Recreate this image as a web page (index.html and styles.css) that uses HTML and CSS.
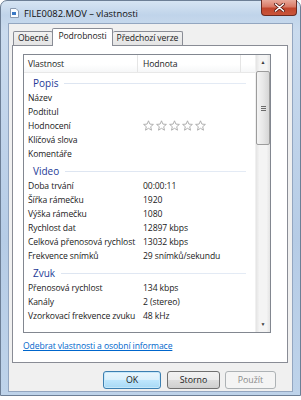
FILE: index.html
```html
<!DOCTYPE html>
<html lang="cs">
<head>
    <meta charset="UTF-8">
    <meta name="viewport" content="width=device-width, initial-scale=1.0">
    <title>FILE0082.MOV – vlastnosti</title>
    <link rel="stylesheet" href="styles.css">
</head>
<body>
    <div class="window">
        <div class="titlebar">
            <svg class="file-icon" width="9" height="10" viewBox="0 0 9 10">
                <path d="M0.5 0.5h5.5l2.5 2.5v6.5h-8z" fill="#fafcff" stroke="#8a9ab0"/>
                <rect x="2" y="4" width="4" height="3" fill="#3b78c4"/>
            </svg>
            <span class="title">FILE0082.MOV – vlastnosti</span>
            <div class="close-btn">
                <svg width="11" height="9" viewBox="0 0 11 9">
                    <path d="M1.5 1l8 7M9.5 1l-8 7" stroke="#5a1a10" stroke-width="3" stroke-linecap="round"/>
                    <path d="M1.5 1l8 7M9.5 1l-8 7" stroke="#fff" stroke-width="1.6" stroke-linecap="round"/>
                </svg>
            </div>
        </div>
        <div class="client">
            <div class="tabs">
                <div class="tab tab-first">Obecné</div>
                <div class="tab tab-active">Podrobnosti</div>
                <div class="tab">Předchozí verze</div>
            </div>
            <div class="panel">
                <div class="listbox">
                    <div class="list-content">
                        <div class="list-header">
                            <div class="hcell hcell-name">Vlastnost</div>
                            <div class="hcell hcell-value">Hodnota</div>
                            <div class="hcell hcell-rest"></div>
                        </div>

                        <div class="group"><span>Popis</span><i></i></div>
                        <div class="row"><span class="name">Název</span><span class="value"></span></div>
                        <div class="row"><span class="name">Podtitul</span><span class="value"></span></div>
                        <div class="row"><span class="name">Hodnocení</span>
                            <span class="value">
                                <svg class="stars" width="66" height="12" viewBox="0 0 66 12">
                                    <g fill="none" stroke="#a8a8a8" stroke-width="0.9" stroke-linejoin="round">
                                        <path id="star" d="M5.5 0.8l1.4 3.3 3.5 0.3-2.7 2.3 0.8 3.5-3-1.9-3 1.9 0.8-3.5-2.7-2.3 3.5-0.3z"/>
                                        <use href="#star" x="13"/>
                                        <use href="#star" x="26"/>
                                        <use href="#star" x="39"/>
                                        <use href="#star" x="52"/>
                                    </g>
                                </svg>
                            </span>
                        </div>
                        <div class="row"><span class="name">Klíčová slova</span><span class="value"></span></div>
                        <div class="row"><span class="name">Komentáře</span><span class="value"></span></div>

                        <div class="group"><span>Video</span><i></i></div>
                        <div class="row"><span class="name">Doba trvání</span><span class="value">00:00:11</span></div>
                        <div class="row"><span class="name">Šířka rámečku</span><span class="value">1920</span></div>
                        <div class="row"><span class="name">Výška rámečku</span><span class="value">1080</span></div>
                        <div class="row"><span class="name">Rychlost dat</span><span class="value">12897 kbps</span></div>
                        <div class="row"><span class="name">Celková přenosová rychlost</span><span class="value">13032 kbps</span></div>
                        <div class="row"><span class="name">Frekvence snímků</span><span class="value">29 snímků/sekundu</span></div>

                        <div class="group"><span>Zvuk</span><i></i></div>
                        <div class="row"><span class="name">Přenosová rychlost</span><span class="value">134 kbps</span></div>
                        <div class="row"><span class="name">Kanály</span><span class="value">2 (stereo)</span></div>
                        <div class="row"><span class="name">Vzorkovací frekvence zvuku</span><span class="value">48 kHz</span></div>
                    </div>
                    <div class="scrollbar">
                        <div class="sb-arrow">&#9650;</div>
                        <div class="sb-thumb"><span class="grip"></span></div>
                        <div class="sb-track"></div>
                        <div class="sb-arrow">&#9660;</div>
                    </div>
                </div>
                <a class="link" href="#">Odebrat vlastnosti a osobní informace</a>
            </div>
            <div class="buttons">
                <button class="btn btn-default btn-ok">OK</button>
                <button class="btn btn-cancel">Storno</button>
                <button class="btn btn-apply" disabled>Použít</button>
            </div>
        </div>
    </div>
</body>
</html>
```

FILE: styles.css
```css
body {
    margin: 0;
    background-color: #ffffff;
    font-family: "Open Sans", "Noto Sans", sans-serif;
    font-size: 8.6px;
    letter-spacing: -0.1px;
    color: #1a1a1a;
}
.window {
    box-sizing: border-box;
    width: 301px;
    height: 396px;
    padding: 0 7px 3px 7px;
    display: flex;
    flex-direction: column;
    border: 1px solid #6d7f96;
    border-radius: 7px 7px 0 0;
    background: linear-gradient(180deg, #d6e4f3 0, #c0d4ea 14px, #cadbee 30px, #b6cce6 60%, #bed3ea 100%);
}
.titlebar {
    height: 22px;
    display: flex;
    align-items: center;
}
.file-icon {
    margin-left: 2px;
    margin-top: 2px;
}
.title {
    margin-left: 5px;
    margin-top: 2px;
    font-size: 9.4px;
    letter-spacing: 0;
    color: #101010;
}
.close-btn {
    margin-left: auto;
    margin-right: -4px;
    align-self: flex-start;
    width: 36px;
    height: 16px;
    margin-top: -1px;
    box-sizing: border-box;
    border: 1px solid #6b2a20;
    border-top: none;
    border-radius: 0 0 4px 4px;
    background: linear-gradient(180deg, #e9a99a 0, #d97a66 45%, #c2452c 55%, #c9553a 100%);
    display: flex;
    align-items: center;
    justify-content: center;
}
.client {
    flex: 1;
    background-color: #f0f0f0;
    border: 1px solid #93a6c0;
    padding: 4px 4px 0 3px;
}
.tabs {
    display: flex;
    align-items: flex-end;
    height: 17px;
    padding-left: 1px;
}
.tab {
    height: 14px;
    box-sizing: border-box;
    padding: 0 4px;
    border: 1px solid #898c95;
    border-bottom: none;
    border-left: none;
    background: linear-gradient(180deg, #f2f2f2, #e4e4e4);
    line-height: 13px;
    border-radius: 2px 2px 0 0;
}
.tab-first {
    border-left: 1px solid #898c95;
}
.tab-active {
    height: 18px;
    margin-bottom: -1px;
    margin-left: -1px;
    border-left: 1px solid #898c95;
    padding: 0 5px;
    background: #ffffff;
    position: relative;
    z-index: 1;
    line-height: 15px;
}
.panel {
    height: 318px;
    box-sizing: border-box;
    border: 1px solid #898c95;
    background-color: #ffffff;
    padding: 8px 16px 0 10px;
}
.listbox {
    height: 279px;
    box-sizing: border-box;
    border: 1px solid #828790;
    display: flex;
    overflow: hidden;
}
.list-content {
    flex: 1;
    overflow: hidden;
}
.list-header {
    display: flex;
    height: 18px;
    background: linear-gradient(180deg, #ffffff 0, #ffffff 55%, #f6f7f8 100%);
    border-bottom: 1px solid #e8e8e8;
    box-sizing: border-box;
}
.hcell {
    border-right: 1px solid #e5e5e5;
    line-height: 18px;
    box-sizing: border-box;
}
.hcell-name {
    width: 114px;
    padding-left: 4px;
}
.hcell-value {
    width: 103px;
    padding-left: 5px;
}
.hcell-rest {
    flex: 1;
    border-right: none;
}
.group {
    height: 18px;
    display: flex;
    align-items: center;
    padding: 2px 9px 0 9px;
    box-sizing: border-box;
    color: #1e3a96;
    font-size: 10px;
    letter-spacing: 0;
}
.group i {
    flex: 1;
    height: 1px;
    margin-left: 6px;
    background: linear-gradient(90deg, #dde5f1, #e4ebf5);
}
.row {
    display: flex;
    height: 14px;
    line-height: 14px;
    white-space: nowrap;
}
.row .name {
    width: 114px;
    padding-left: 4px;
    box-sizing: border-box;
}
.row .value {
    padding-left: 5px;
    display: flex;
    align-items: center;
}
.stars {
    display: block;
}
.scrollbar {
    width: 14px;
    display: flex;
    flex-direction: column;
    background: linear-gradient(90deg, #e4e4e4 0, #f4f4f4 25%, #f4f4f4 75%, #e4e4e4 100%);
    border-left: 1px solid #f0f0f0;
}
.sb-arrow {
    height: 15px;
    font-size: 5px;
    line-height: 15px;
    text-align: center;
    color: #3a3a3a;
}
.sb-thumb {
    height: 74px;
    margin: 1px 0 0 0;
    box-sizing: border-box;
    border: 1px solid #9c9c9c;
    border-radius: 2px;
    background: linear-gradient(90deg, #f4f4f4, #e8e8e8 50%, #d6d6d6);
    display: flex;
    align-items: center;
    justify-content: center;
}
.grip {
    width: 5px;
    height: 5px;
    background: repeating-linear-gradient(180deg, #6b6b6b 0, #6b6b6b 1px, transparent 1px, transparent 2px);
}
.sb-track {
    flex: 1;
}
.link {
    display: block;
    margin-top: 7px;
    color: #0066cc;
    text-decoration: underline;
    line-height: 12px;
}
.buttons {
    display: flex;
    justify-content: flex-end;
    margin-top: 8px;
    padding-right: 12px;
    gap: 5px;
}
.btn {
    height: 18px;
    box-sizing: border-box;
    font-family: inherit;
    font-size: 8.8px;
    border-radius: 3px;
    border: 1px solid #707070;
    background: linear-gradient(180deg, #f2f2f2 0, #ebebeb 50%, #dddddd 51%, #cfcfcf 100%);
    color: #1a1a1a;
    padding: 0;
}
.btn-ok {
    width: 58px;
    margin-right: 1px;
    border-color: #3c7fb1;
    background: linear-gradient(180deg, #eaf6fd 0, #d9f0fc 50%, #bee6fd 51%, #a7d9f5 100%);
    box-shadow: inset 0 0 0 1px #c6e8fa;
}
.btn-cancel {
    width: 53px;
}
.btn-apply {
    width: 51px;
    border-color: #adb2b5;
    background: #f4f4f4;
    color: #8a8a8a;
}
```
